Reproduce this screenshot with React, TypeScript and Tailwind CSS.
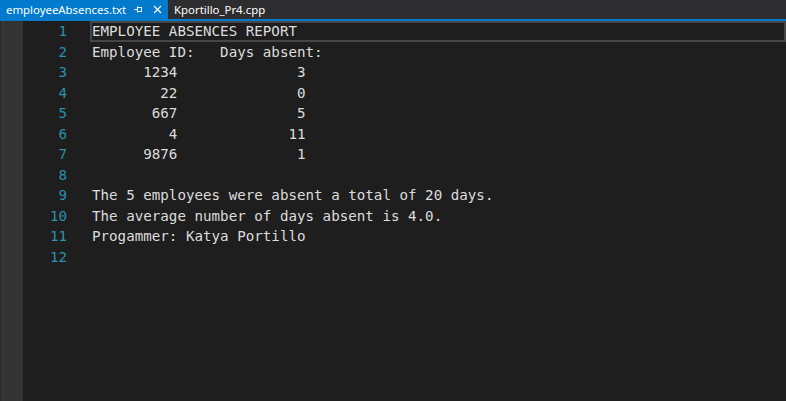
const lines = [
  "EMPLOYEE ABSENCES REPORT",
  "Employee ID:   Days absent:",
  "      1234              3",
  "        22              0",
  "       667              5",
  "         4             11",
  "      9876              1",
  "",
  "The 5 employees were absent a total of 20 days.",
  "The average number of days absent is 4.0.",
  "Progammer: Katya Portillo",
  "",
];

function PinIcon() {
  return (
    <svg width="9" height="9" viewBox="0 0 9 9" className="text-white">
      <path d="M0.5 4.5h3M3.5 1.5v6M3.5 2.5h4.5M3.5 6.5h4.5M7.5 2.5v4" stroke="currentColor" strokeWidth="1" fill="none" />
    </svg>
  );
}

function CloseIcon() {
  return (
    <svg width="9" height="9" viewBox="0 0 9 9" className="text-white">
      <path d="M1 1l7 7M8 1l-7 7" stroke="currentColor" strokeWidth="1.3" fill="none" />
    </svg>
  );
}

export default function App() {
  return (
    <div className="w-[786px] h-[401px] overflow-hidden bg-[#1e1e1e] flex flex-col">
      <div className="h-[19px] bg-[#2d2d30] flex items-stretch shrink-0 font-['Noto_Sans',sans-serif] text-[11.4px] text-white">
        <div className="w-[168px] bg-[#007acc] flex items-center pl-[6px] pr-[6px]">
          <span className="leading-none">employeeAbsences.txt</span>
          <span className="ml-auto flex items-center">
            <PinIcon />
          </span>
          <span className="ml-[10px] flex items-center">
            <CloseIcon />
          </span>
        </div>
        <div className="flex items-center pl-[6px] pr-[6px]">
          <span className="leading-none">Kportillo_Pr4.cpp</span>
        </div>
      </div>
      <div className="h-[2px] bg-[#007acc] shrink-0" />
      <div className="flex flex-1">
        <div className="w-[2px] bg-[#2b2b30]" />
        <div className="w-[1px] bg-[#3c3c42]" />
        <div className="w-[20px] bg-[#333333]" />
        <div className="flex-1 flex font-['DejaVu_Sans_Mono',monospace] text-[14.2px] leading-[20.5px]">
          <div className="w-[44px] text-right text-[#2b91af]">
            {lines.map((_, i) => (
              <div key={i}>{i + 1}</div>
            ))}
          </div>
          <div className="flex-1 pl-[25px]">
            {lines.map((l, i) => (
              <div
                key={i}
                className={
                  i === 0
                    ? "-ml-[2px] border-2 border-[#464646] text-[#dcdcdc] whitespace-pre h-[20.5px] leading-[16.5px]"
                    : "text-[#dcdcdc] whitespace-pre h-[20.5px]"
                }
              >
                {l}
              </div>
            ))}
          </div>
        </div>
      </div>
    </div>
  );
}
